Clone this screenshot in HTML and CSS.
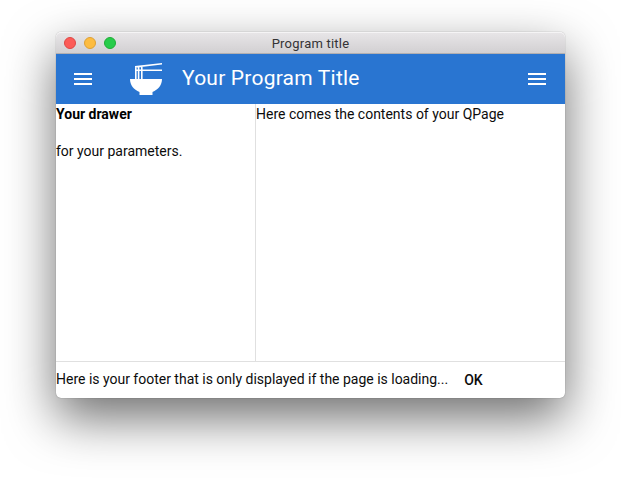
FILE: index.html
```html
<!DOCTYPE html>
<html lang="en">
<head>
<meta charset="utf-8">
<title>Program title</title>
<link rel="stylesheet" href="styles.css">
</head>
<body>
<div class="window">
  <div class="titlebar">
    <div class="lights">
      <span class="light close"></span>
      <span class="light minimize"></span>
      <span class="light maximize"></span>
    </div>
    <span class="window-title">Program title</span>
  </div>
  <header class="toolbar">
    <svg class="menu" viewBox="0 0 18 12"><path d="M0 0h18v2H0zM0 5h18v2H0zM0 10h18v2H0z"/></svg>
    <svg class="bowl" viewBox="0 0 32 32">
      <path d="M0 16h32c0 6.200-3.800 10.600-9.500 13v3h-13v-3C3.800 26.600 0 22.200 0 16z"/>
      <path d="M5 3.100L32 0v1.500L5 4.800zM5 6.400h27v1.600H5zM5 4h1.600v12H5zM7.800 4h1.600v12H7.800zM11 3.600h1.600V16H11z"/>
    </svg>
    <h1 class="toolbar-title">Your Program Title</h1>
    <svg class="menu" viewBox="0 0 18 12"><path d="M0 0h18v2H0zM0 5h18v2H0zM0 10h18v2H0z"/></svg>
  </header>
  <div class="content">
    <aside class="drawer"><h5 class="drawer-heading">Your drawer</h5><p class="drawer-text">for your parameters.</p></aside>
    <main class="page">Here comes the contents of your QPage</main>
  </div>
  <footer class="footer">
    <span class="status">Here is your footer that is only displayed if the page is loading...</span>
    <button class="ok">OK</button>
  </footer>
</div>
</body>
</html>
```
FILE: styles.css
```css
* { box-sizing: border-box; }

body {
  margin: 0;
  height: 478px;
  padding: 32px 56px 80px;
  overflow: hidden;
  background: #fff;
  color: #0c0c0c;
  font: 14px/21px Roboto, sans-serif;
}

.window {
  display: flex;
  flex-direction: column;
  width: 509px;
  height: 366px;
  border-radius: 5px;
  background: #fff;
  box-shadow: 0 0 1px rgba(0, 0, 0, .5), 0 20px 50px rgba(0, 0, 0, .57);
}

.titlebar {
  display: grid;
  grid-template-columns: 60px 1fr 60px;
  align-items: center;
  height: 22px;
  border-bottom: 1px solid #b1afb1;
  border-radius: 5px 5px 0 0;
  background: linear-gradient(#e8e6e8, #d2d0d2);
  box-shadow: inset 0 1px #f5f4f5;
}

.lights { display: flex; gap: 8px; padding-left: 8px; }

.light { width: 12px; height: 12px; border: 1px solid; border-radius: 50%; }
.close { background: #fc5b57; border-color: #df4744; }
.minimize { background: #fdbc40; border-color: #dea034; }
.maximize { background: #27cc4a; border-color: #1fad36; }

.window-title {
  padding-top: 2px;
  color: #343335;
  font-size: 13px;
  line-height: 20px;
  letter-spacing: .22px;
  text-align: center;
}

.toolbar {
  display: flex;
  align-items: center;
  height: 50px;
  padding: 0 19px 0 18px;
  background: #2975d1;
  color: #fff;
}

.menu { width: 18px; height: 12px; fill: #fff; }
.bowl { width: 32px; height: 32px; margin-left: 38px; fill: #fff; }

.toolbar-title {
  flex: 1;
  margin: 0 0 3px 20px;
  font-size: 21px;
  font-weight: 400;
  line-height: 24px;
  letter-spacing: .21px;
}

.content { display: flex; flex: 1; }
.drawer { width: 200px; border-right: 1px solid #e0e0e0; }
.drawer-heading { margin: 0 0 16px; font-size: 14px; line-height: 21px; color: #000; }
.drawer-text { margin: 0; }
.page { flex: 1; }

.footer {
  display: flex;
  align-items: center;
  height: 37px;
  border-top: 1px solid #e0e0e0;
}

.status { margin-bottom: 2px; letter-spacing: -.008px; }

.ok {
  margin: 1px 0 0;
  padding: 0 16px;
  border: 0;
  background: none;
  color: #0c0c0c;
  font: 500 14px/21px Roboto, sans-serif;
}
```
